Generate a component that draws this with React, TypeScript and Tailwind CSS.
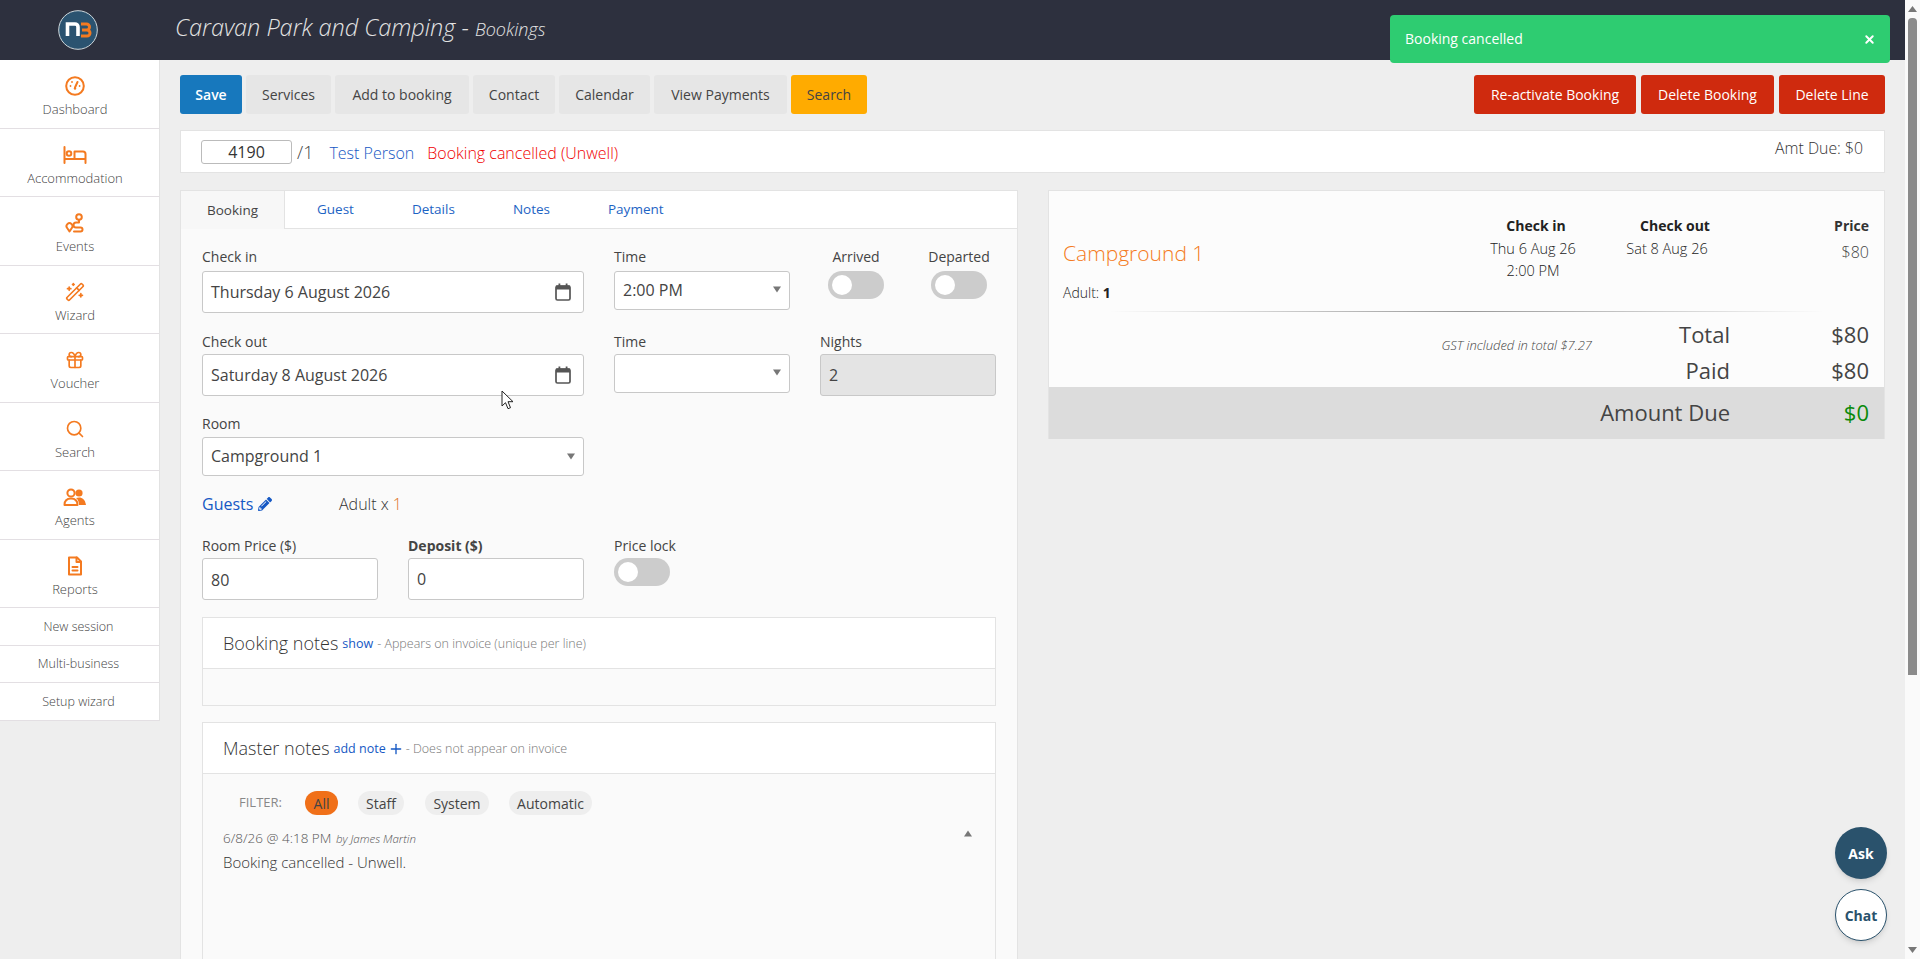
import React from "react";
import { Gift, Search, WandSparkles, Plus, X } from "lucide-react";
import { FaPencilAlt } from "react-icons/fa";

const O = "#f47a20";
const ic = { fill: "none", stroke: O, strokeWidth: 2, strokeLinecap: "round" as const, strokeLinejoin: "round" as const };

const Dash = () => (
  <svg width="20" height="20" viewBox="0 0 20 20" {...ic}>
    <circle cx="10" cy="10" r="8.8" />
    <path d="M10 11.5 12.5 6" />
    <circle cx="10" cy="12.5" r="1.2" fill={O} stroke="none" />
    <circle cx="5.5" cy="10" r=".9" fill={O} stroke="none" />
    <circle cx="7" cy="6" r=".9" fill={O} stroke="none" />
    <circle cx="14.6" cy="10" r=".9" fill={O} stroke="none" />
  </svg>
);
const Bed = () => (
  <svg width="24" height="20" viewBox="0 0 24 20" {...ic}>
    <path d="M1.5 2v16M1.5 14h21v4M22.5 14V9a2.5 2.5 0 0 0-2.5-2.5h-8.5V14" />
    <circle cx="6" cy="8.5" r="2.3" />
  </svg>
);
const Route = () => (
  <svg width="20" height="20" viewBox="0 0 20 20" {...ic}>
    <circle cx="14" cy="4" r="2.8" />
    <path d="M14 7v2.5h-3a2.500 2.500 0 0 0 0 5h4.500a2 2 0 0 1 0 4H9" />
    <path d="M4.5 18.5 2 14.800a3 3 0 1 1 5 0Z" />
  </svg>
);
const Agents = () => (
  <svg width="24" height="20" viewBox="0 0 24 20">
    <circle cx="8" cy="6" r="3.6" fill="none" stroke={O} strokeWidth="2" />
    <circle cx="16" cy="6" r="3.6" fill={O} />
    <path d="M1.5 18c0-4.500 2.800-6.500 6.500-6.500s6.500 2 6.500 6.500Z" fill="none" stroke={O} strokeWidth="2" strokeLinejoin="round" />
    <path d="M13 11c4-1.500 9-.5 10 7h-7c0-3-1-5.500-3-7Z" fill={O} />
  </svg>
);
const Doc = () => (
  <svg width="20" height="20" viewBox="0 0 20 20" {...ic}>
    <path d="M4 1.500h8l4 4v13H4Z" />
    <path d="M11.500 1.500v4.500H16M7.500 11h5M7.500 14.500h5" />
  </svg>
);
const Cal = () => (
  <svg width="16" height="18" viewBox="0 0 16 18" className="shrink-0">
    <rect x="1" y="3" width="14" height="14" rx="1.500" fill="none" stroke="#555" strokeWidth="1.700" />
    <rect x="1" y="2.500" width="14" height="4" fill="#555" />
    <rect x="3.500" y="0.500" width="1.800" height="3" fill="#555" />
    <rect x="10.700" y="0.500" width="1.800" height="3" fill="#555" />
  </svg>
);
const Tri = ({ up = false }: { up?: boolean }) => (
  <svg width="8" height="7" viewBox="0 0 8 7" className="shrink-0">
    <polygon points={up ? "4,0.500 8,6.500 0,6.500" : "0,0.500 8,0.500 4,6.500"} fill="#777" />
  </svg>
);

const nav: [string, React.ReactNode][] = [
  ["Dashboard", <Dash />],
  ["Accommodation", <Bed />],
  ["Events", <Route />],
  ["Wizard", <WandSparkles size={20} color={O} strokeWidth={2} />],
  ["Voucher", <Gift size={20} color={O} strokeWidth={2} />],
  ["Search", <Search size={20} color={O} strokeWidth={2} />],
  ["Agents", <Agents />],
  ["Reports", <Doc />],
];

const Btn = ({ w, children, cls }: { w: string; children: React.ReactNode; cls: string }) => (
  <div className={`${w} ${cls} h-[39px] rounded-[3px] flex items-center justify-center text-[14px]`}>{children}</div>
);
const Label = ({ children, cls = "" }: { children: React.ReactNode; cls?: string }) => (
  <div className={`h-5 mb-[2px] leading-5 text-[14px] text-[#444] whitespace-nowrap ${cls}`}>{children}</div>
);
const field = "border border-[#c8c8c8] rounded-[3px] bg-white flex items-center text-[16px] text-[#444]";
const Toggle = () => (
  <div className="w-[56px] h-[28px] rounded-full bg-[#ccc] flex items-center pl-1">
    <div className="w-5 h-5 rounded-full bg-white" />
  </div>
);

export default function App() {
  return (
    <div className="relative h-[959px] w-[1920px] overflow-hidden flex bg-[#eee] font-['Open_Sans',sans-serif] text-[#444]">
      <div className="w-[1905px] flex flex-col">
        <header className="h-[60px] shrink-0 bg-[#2d303e] flex items-center">
          <div className="w-[175px] flex justify-center pr-[19px]">
            <svg width="40" height="40" viewBox="0 0 40 40">
              <circle cx="20" cy="20" r="19.300" fill="#2b5370" stroke="#cfd8dc" strokeWidth="1" />
              <path d="M9.500 26V14h7.500a3 3 0 0 1 3 3v9" fill="none" stroke="#fff" strokeWidth="3.600" />
              <path d="M23 14h5.500a2.800 2.800 0 0 1 0 6H24m0 0h5a3 3 0 0 1 0 6h-6" fill="none" stroke={O} strokeWidth="3" />
            </svg>
          </div>
          <div className="-mt-[5px] italic font-light text-[#e3e3e3] text-[23.5px] leading-none whitespace-nowrap">
            Caravan Park and Camping - <span className="text-[18px]">Bookings</span>
          </div>
        </header>

        <div className="flex flex-1 min-h-0">
          <aside className="w-[160px] shrink-0 self-start bg-white border-r border-[#e2e2e2]">
            {nav.map(([t, i]) => (
              <div key={t} className="h-[68.5px] border-b border-[#e3dfe3] flex flex-col items-center pt-4 pr-[9px] text-[13px] font-light text-[#444]">
                <div className="h-5 flex items-center justify-center">{i}</div>
                <div className="mt-[3px] leading-5">{t}</div>
              </div>
            ))}
            {["New session", "Multi-business", "Setup wizard"].map((t) => (
              <div key={t} className="h-[37.5px] border-b border-[#e3dfe3] flex items-center justify-center pr-[2px] pt-[2px] text-[12.5px] font-light text-[#444]">{t}</div>
            ))}
          </aside>

          <main className="flex-1 min-w-0 px-5 pt-[15px]">
            <div className="flex justify-between">
              <div className="flex gap-[4px]">
                <Btn w="w-[62px]" cls="bg-[#1778bd] text-white font-semibold">Save</Btn>
                <Btn w="w-[85px]" cls="bg-[#e6e6e6] text-[#444]">Services</Btn>
                <Btn w="w-[134px]" cls="bg-[#e6e6e6] text-[#444]">Add to booking</Btn>
                <Btn w="w-[82px]" cls="bg-[#e6e6e6] text-[#444]">Contact</Btn>
                <Btn w="w-[91px]" cls="bg-[#e6e6e6] text-[#444]">Calendar</Btn>
                <Btn w="w-[133px]" cls="bg-[#e6e6e6] text-[#444]">View Payments</Btn>
                <Btn w="w-[76px]" cls="bg-[#ffab00] text-[#444]">Search</Btn>
              </div>
              <div className="flex gap-[5px]">
                <Btn w="w-[162px]" cls="bg-[#cf2a0e] text-white">Re-activate Booking</Btn>
                <Btn w="w-[133px]" cls="bg-[#cf2a0e] text-white">Delete Booking</Btn>
                <Btn w="w-[106px]" cls="bg-[#cf2a0e] text-white">Delete Line</Btn>
              </div>
            </div>

            <div className="mt-4 h-[43px] bg-white border border-[#e3e3e3] flex items-center pl-5 pr-[21px] text-[16px] font-light">
              <div className="w-[91px] h-6 border border-[#bbb] rounded-[3px] flex items-center justify-center text-[16px] font-normal text-[#333]">4190</div>
              <span className="ml-[5px] mt-[1px] text-[18px]">/1</span>
              <span className="ml-[16px] mt-[2px] text-[#1558c4]">Test Person</span>
              <span className="ml-[13px] mt-[2px] text-[#f00000]">Booking cancelled (Unwell)</span>
              <span className="ml-auto -mt-[5px] text-[15.8px] text-[#333]">Amt Due: $0</span>
            </div>

            <div className="mt-[17px] grid grid-cols-[838px_837px] gap-[30px] items-start">
              <section className="h-[900px] bg-[#fafafa] border border-[#e3e3e3]">
                <div className="h-[38px] bg-white border-b border-[#e3e3e3] flex text-[13.5px] text-[#1d64c4]">
                  <div className="w-[104px] h-[38px] bg-[#f7f7f7] border-r border-[#e3e3e3] flex items-center justify-center text-[#444]">Booking</div>
                  <div className="flex items-center gap-[58px] pl-[32px]">
                    <span>Guest</span>
                    <span>Details</span>
                    <span>Notes</span>
                    <span>Payment</span>
                  </div>
                </div>

                <div className="pl-[21px] pr-[21px] pt-[18px]">
                  <div className="flex gap-[30px]">
                    <div className="w-[382px]">
                      <Label cls="mb-[4px]">Check in</Label>
                      <div className={`${field} h-[42px] pl-2 pr-3 justify-between`}>Thursday 6 August 2026<Cal /></div>
                    </div>
                    <div className="w-[176px]">
                      <Label cls="mb-[4px]">Time</Label>
                      <div className={`${field} h-[39px] px-2 pb-[2px] justify-between`}>2:00 PM<Tri /></div>
                    </div>
                    <div className="ml-2 w-[159px] flex justify-between">
                      <div className="w-[56px] flex flex-col items-center">
                        <Label cls="mb-[4px]">Arrived</Label>
                        <Toggle />
                      </div>
                      <div className="w-[56px] flex flex-col items-center">
                        <Label cls="mb-[4px]">Departed</Label>
                        <Toggle />
                      </div>
                    </div>
                  </div>

                  <div className="flex gap-[30px] mt-[19px]">
                    <div className="w-[382px]">
                      <Label>Check out</Label>
                      <div className={`${field} h-[42px] pl-2 pr-3 justify-between`}>Saturday 8 August 2026<Cal /></div>
                    </div>
                    <div className="w-[176px]">
                      <Label>Time</Label>
                      <div className={`${field} h-[39px] px-2 pb-[2px] justify-end`}><Tri /></div>
                    </div>
                    <div className="w-[176px]">
                      <Label>Nights</Label>
                      <div className="h-[42px] px-2 border border-[#c8c8c8] rounded-[3px] bg-[#e4e4e4] flex items-center text-[16px]">2</div>
                    </div>
                  </div>

                  <div className="mt-[18px] w-[382px]">
                    <Label cls="mb-[3px]">Room</Label>
                    <div className={`${field} h-[39px] px-2 pb-[1px] justify-between`}>Campground 1<Tri /></div>
                  </div>

                  <div className="mt-[18px] h-5 flex items-center text-[16px]">
                    <div className="w-[137px] flex items-center gap-[5px] text-[#1558c4]">
                      Guests <FaPencilAlt size={14} color="#1558c4" />
                    </div>
                    <span className="font-light text-[#333]">Adult x <span className="text-[#e0701c]">1</span></span>
                  </div>

                  <div className="mt-[22px] flex gap-[30px]">
                    <div className="w-[176px]">
                      <Label>Room Price ($)</Label>
                      <div className={`${field} h-[42px] px-2 pt-[1px]`}>80</div>
                    </div>
                    <div className="w-[176px]">
                      <Label cls="font-bold">Deposit ($)</Label>
                      <div className={`${field} h-[42px] px-2 mt-[1px]`}>0</div>
                    </div>
                    <div>
                      <Label>Price lock</Label>
                      <Toggle />
                    </div>
                  </div>

                  <div className="mt-[17px] h-[89px] border border-[#e3e3e3]">
                    <div className="h-[51px] bg-white border-b border-[#e3e3e3] flex items-center pl-[20px] font-light whitespace-nowrap">
                      <span className="text-[18px] text-[#333]">Booking notes</span>
                      <span className="ml-[4px] mt-[3px] text-[12.5px] text-[#1558c4] font-normal">show</span>
                      <span className="ml-[4px] mt-[3px] text-[12.5px] text-[#777]">- Appears on invoice (unique per line)</span>
                    </div>
                  </div>

                  <div className="mt-[16px] h-[400px] border border-[#e3e3e3]">
                    <div className="h-[51px] bg-white border-b border-[#e3e3e3] flex items-center pl-[20px] font-light whitespace-nowrap">
                      <span className="text-[18px] text-[#333]">Master notes</span>
                      <span className="ml-[4px] mt-[3px] text-[12.5px] text-[#1558c4] font-normal">add note</span>
                      <Plus size={16} color="#1558c4" strokeWidth={2} className="ml-[2px] mt-[2px]" />
                      <span className="ml-[2px] mt-[3px] text-[12.5px] text-[#777]">- Does not appear on invoice</span>
                    </div>
                    <div className="pl-[36px] pt-[17px] flex items-center h-[41px] text-[14px]">
                      <span className="text-[13px] text-[#888] w-[66px]">FILTER:</span>
                      <span className="w-[33px] h-6 rounded-full bg-[#f07019] flex items-center justify-center">All</span>
                      <span className="ml-[20px] w-[46px] h-6 rounded-full bg-[#eee] flex items-center justify-center">Staff</span>
                      <span className="ml-[21px] w-[64px] h-6 rounded-full bg-[#eee] flex items-center justify-center">System</span>
                      <span className="ml-[20px] w-[83px] h-6 rounded-full bg-[#eee] flex items-center justify-center">Automatic</span>
                    </div>
                    <div className="pl-[20px] pr-[24px] mt-[13px] flex justify-between items-start">
                      <div>
                        <div className="text-[13.5px] leading-5 font-light text-[#555] whitespace-nowrap">
                          6/8/26 @ 4:18 PM <span className="italic text-[11.5px] ml-[1px]">by James Martin</span>
                        </div>
                        <div className="mt-[3px] text-[15px] leading-5 font-light text-[#333]">Booking cancelled - Unwell.</div>
                      </div>
                      <div className="mt-[2px] -mr-[1px]"><Tri up /></div>
                    </div>
                  </div>
                </div>
              </section>

              <section className="bg-[#fcfcfc] border border-[#e3e3e3] border-b-0">
                <div className="pt-[25px] px-[15px] flex">
                  <div className="flex-1">
                    <div className="mt-[23px] text-[21px] leading-7 font-light -ml-[1px] text-[#f47a20]">Campground 1</div>
                    <div className="mt-[16px] -ml-[1px] text-[14px] leading-5 font-light text-[#222]">Adult: <b className="font-bold">1</b></div>
                  </div>
                  <div className="w-[120px] text-center text-[14.5px] leading-[22px] font-light text-[#222] mr-[14px]">
                    <div className="font-bold text-[14px] h-5 leading-5 pl-[6px] mb-[2px]">Check in</div>
                    <div>Thu 6 Aug 26</div>
                    <div>2:00 PM</div>
                  </div>
                  <div className="w-[120px] text-center text-[14.5px] leading-[22px] font-light text-[#222]">
                    <div className="font-bold text-[14px] h-5 leading-5 pl-[16px] mb-[2px]">Check out</div>
                    <div>Sat 8 Aug 26</div>
                  </div>
                  <div className="w-[142px] text-right text-[14px]">
                    <div className="font-bold h-5 leading-5 text-[#333]">Price</div>
                    <div className="mt-[6px] leading-5 text-[16px] font-light text-[#444]">$80</div>
                  </div>
                </div>
                <div className="mt-[8px] mx-[60px] h-px bg-gradient-to-r from-transparent via-[#999] to-transparent" />
                <div className="mt-[4px] pr-[15px]">
                  <div className="h-9 flex justify-end items-center text-[22px] leading-9 text-[#444]">
                    <span className="pt-[21px] text-[13px] font-light italic">GST included in total $7.27</span>
                    <span className="w-[138px] text-right">Total</span>
                    <span className="w-[139px] text-right">$80</span>
                  </div>
                  <div className="h-[35px] flex justify-end text-[22px] leading-9 text-[#444]">
                    <span className="text-right">Paid</span>
                    <span className="w-[139px] text-right">$80</span>
                  </div>
                </div>
                <div className="h-[52px] bg-[#dcdcdc] pr-[15px] pb-[2px] flex justify-end items-center text-[22px] text-[#444]">
                  <span>Amount Due</span>
                  <span className="w-[139px] text-right text-[#0a8a0a]">$0</span>
                </div>
              </section>
            </div>
          </main>
        </div>
      </div>

      <div className="w-[15px] shrink-0 bg-[#fafafa] flex flex-col items-center pt-[6px]">
        <svg width="9" height="6" viewBox="0 0 9 6"><polygon points="4.500,0 9,6 0,6" fill="#777" /></svg>
        <div className="mt-[6px] w-[9px] h-[657px] rounded-t-[4px] bg-[#8b8b8b]" />
        <svg width="9" height="6" viewBox="0 0 9 6" className="mt-auto mb-[6px]"><polygon points="0,0 9,0 4.500,6" fill="#777" /></svg>
      </div>

      {/* toast */}
      <div className="absolute left-[1390px] top-[15px] w-[500px] h-[48px] rounded-[4px] bg-[#2ecc71] text-white text-[14px] flex items-center justify-between pl-[15px] pr-[14px]">
        <span className="-mt-[2px]">Booking cancelled</span>
        <X size={13} strokeWidth={3.500} color="#fff" />
      </div>

      {/* floating buttons */}
      <div className="absolute left-[1835px] top-[827px] w-[52px] h-[52px] rounded-full bg-[#2a526c] text-white font-bold text-[14px] flex items-center justify-center shadow-md">Ask</div>
      <div className="absolute left-[1835px] top-[889px] w-[52px] h-[52px] rounded-full bg-white border border-[#2a526c] text-[#2a526c] font-bold text-[14px] flex items-center justify-center shadow-md">Chat</div>

      {/* mouse cursor */}
      <svg className="absolute left-[501px] top-[390px]" width="13" height="20" viewBox="0 0 13 20">
        <path d="M1 1v15l3.500-3.300 2.500 6 2.500-1-2.500-6h5Z" fill="#fff" stroke="#222" strokeWidth="1" />
      </svg>
    </div>
  );
}
